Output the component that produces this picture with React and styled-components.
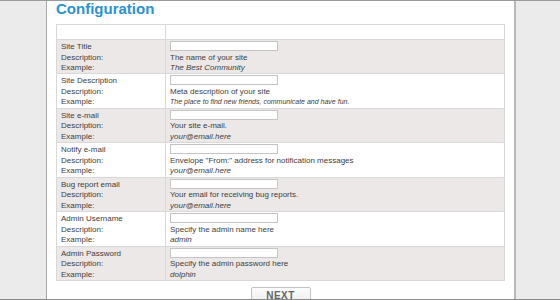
import React from "react";
import styled, { createGlobalStyle } from "styled-components";

const GlobalStyle = createGlobalStyle`
    html, body {
        margin: 0;
        padding: 0;
        width: 560px;
        height: 300px;
        overflow: hidden;
        font-family: "Liberation Sans", Arial, sans-serif;
    }
`

const Frame = styled.div`
    width: 560px;
    height: 300px;
    box-sizing: border-box;
    border-top: 1px solid #9a9a9a;
    border-bottom: 1px solid #8c8c8c;
    background: #ebebeb;
    display: grid;
    grid-template-columns: 46px 470px 1fr;
    overflow: hidden;
`

const Main = styled.div`
    grid-column: 2;
    background: #fff;
    border-left: 1px solid #a8a8a8;
    border-right: 2px solid #b8b8b8;
    padding: 0 9px;
    box-sizing: border-box;
    overflow: hidden;
    display: flex;
    flex-direction: column;
`

const Title = styled.h1`
    margin: 0 0 8px;
    font-size: 15px;
    line-height: 15px;
    font-weight: bold;
    color: #2a92d0;
`

const Table = styled.table`
    width: 449px;
    border-collapse: collapse;
    border: 1px solid #dcdcdc;
    font-size: 8px;
    color: #404040;
`

const HeadRow = styled.tr`
    height: 15px;
`

const Row = styled.tr`
    height: 34.43px;
    background: ${p => (p.$alt ? "#ece8e7" : "#fff")};
`

const Cell = styled.td`
    border: 1px solid #d8d8d8;
    padding: 1px 4px 0;
    vertical-align: top;
    width: ${p => p.$w || "auto"};
`

const Line = styled.div`
    height: 10.5px;
    line-height: 11.5px;
    white-space: nowrap;
    font-style: ${p => (p.$italic ? "italic" : "normal")};
    font-size: ${p => (p.$small ? "7px" : "8px")};
`

const Field = styled.input`
    display: block;
    box-sizing: border-box;
    width: 108px;
    height: 10px;
    margin: 0;
    padding: 0;
    border: 1px solid #c4c4c4;
    background: #fff;
`

const Footer = styled.div`
    display: flex;
    justify-content: center;
    padding-top: 6px;
`

const NextButton = styled.button`
    width: 60px;
    height: 22px;
    border: 1px solid #c2c2c2;
    border-radius: 2px;
    background: linear-gradient(#fdfdfd, #e6e6e6);
    font-family: "Liberation Sans", Arial, sans-serif;
    font-size: 10px;
    font-weight: bold;
    letter-spacing: 0.5px;
    color: #666;
    padding: 0 0 5px;
`

const fields = [
    { title: "Site Title", desc: "The name of your site", example: "The Best Community" },
    { title: "Site Description", desc: "Meta description of your site", example: "The place to find new friends, communicate and have fun.", small: true },
    { title: "Site e-mail", desc: "Your site e-mail.", example: "your@email.here" },
    { title: "Notify e-mail", desc: "Envelope \"From:\" address for notification messages", example: "your@email.here" },
    { title: "Bug report email", desc: "Your email for receiving bug reports.", example: "your@email.here" },
    { title: "Admin Username", desc: "Specify the admin name here", example: "admin" },
    { title: "Admin Password", desc: "Specify the admin password here", example: "dolphin" },
]

export default function App() {
    return (
        <>
            <GlobalStyle />
            <Frame>
                <Main>
                    <Title>Configuration</Title>
                    <Table>
                        <tbody>
                            <HeadRow>
                                <Cell $w="100px"></Cell>
                                <Cell></Cell>
                            </HeadRow>
                            {fields.map((f, i) => (
                                <Row key={f.title} $alt={i % 2 === 0}>
                                    <Cell $w="100px">
                                        <Line>{f.title}</Line>
                                        <Line>Description:</Line>
                                        <Line>Example:</Line>
                                    </Cell>
                                    <Cell>
                                        <Line><Field type="text" /></Line>
                                        <Line>{f.desc}</Line>
                                        <Line $italic $small={f.small}>{f.example}</Line>
                                    </Cell>
                                </Row>
                            ))}
                        </tbody>
                    </Table>
                    <Footer>
                        <NextButton>NEXT</NextButton>
                    </Footer>
                </Main>
            </Frame>
        </>
    )
}
